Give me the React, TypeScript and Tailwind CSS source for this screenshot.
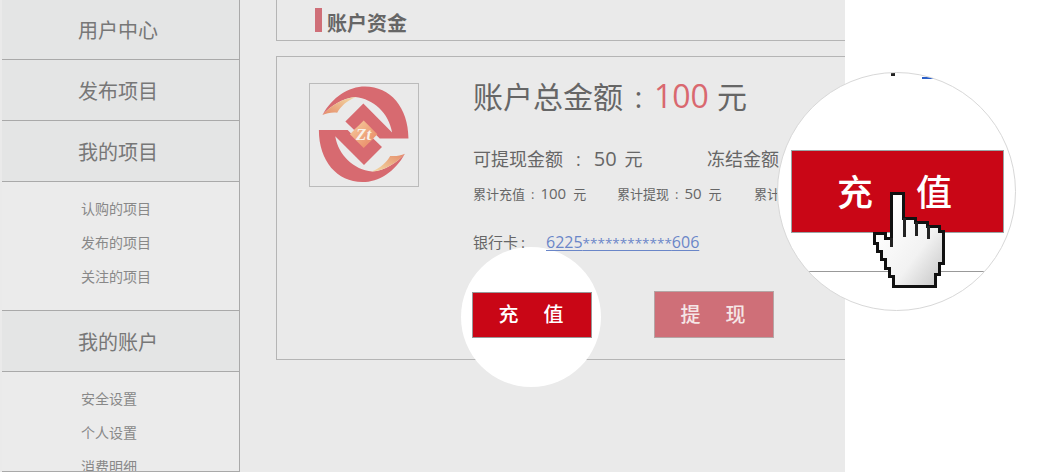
import React from 'react';

const menu = [
  { title: '用户中心', items: [] as string[] },
  { title: '发布项目', items: [] as string[] },
  { title: '我的项目', items: ['认购的项目', '发布的项目', '关注的项目'] },
  { title: '我的账户', items: ['安全设置', '个人设置', '消费明细'] },
];

function Logo() {
  const red = '#d76a70';
  const upper = 'M328 207 L240 207 L190 156 L162 181 L135 155 L190 100 L278 188 C268 130 222 86 165 80 C125 84 92 106 65 135 C95 80 145 48 195 48 C272 48 328 112 328 207 Z';
  const swoosh = 'M65 135 C92 106 125 84 168 80 C138 92 122 108 110 128 C92 126 78 130 65 135 Z';
  return (
    <svg viewBox="28 40 328 312" className="h-full w-full">
      <defs>
        <linearGradient id="swoosh" x1="0" y1="1" x2="1" y2="0">
          <stop offset="0" stopColor="#e58a68" />
          <stop offset="1" stopColor="#f3dca6" />
        </linearGradient>
        <linearGradient id="gem" x1="0" y1="0" x2="1" y2="1">
          <stop offset="0" stopColor="#f6cfa0" />
          <stop offset="1" stopColor="#e8815f" />
        </linearGradient>
      </defs>
      <path d={upper} fill={red} />
      <path d={upper} fill={red} transform="rotate(180 191 194)" />
      <path d={swoosh} fill="url(#swoosh)" />
      <path d={swoosh} fill="url(#swoosh)" transform="rotate(180 191 194)" />
      <path d="M191 152 L233 194 L191 236 L149 194 Z" fill="url(#gem)" />
      <text x="191" y="212" textAnchor="middle" fontSize="52" fontStyle="italic" fontWeight="700" fill="#f8f1ea" fontFamily="'Liberation Serif', serif">Zt</text>
    </svg>
  );
}

function HandCursor() {
  const outline =
    'M19 4 L31 4 L31 29 L43 29 L43 33 L55 33 L55 37 L67 37 L67 42 L71 42 L71 74 L67 74 L67 85 L63 85 L63 97 L21 97 L21 87 L17 87 L17 79 L13 79 L13 70 L9 70 L9 62 L5 62 L5 54 L2 54 L2 44 L13 44 L13 49 L19 49 Z';
  return (
    <svg viewBox="0 0 76 102" className="absolute left-[94px] top-[116px] h-[102px] w-[76px]" shapeRendering="crispEdges">
      <defs>
        <linearGradient id="handFill" x1="0.2" y1="0.2" x2="1" y2="1">
          <stop offset="0" stopColor="#ffffff" />
          <stop offset="0.55" stopColor="#f2f2f2" />
          <stop offset="1" stopColor="#c4c4c4" />
        </linearGradient>
      </defs>
      <path d={outline} fill="url(#handFill)" stroke="#111" strokeWidth="3" />
      <path d="M32 29 L32 48 M44 33 L44 47 M56 37 L56 50" stroke="#222" strokeWidth="3" fill="none" />
      <path d="M19 49 L19 58" stroke="#222" strokeWidth="3" fill="none" />
    </svg>
  );
}

export default function App() {
  return (
    <div className="flex h-[472px] w-[1062px] overflow-hidden bg-white font-['Open_Sans','Noto_Sans_CJK_SC',sans-serif] relative">
      <div className="flex w-[845px] shrink-0 bg-[#eaeaea] pl-[2px]">
        {/* sidebar */}
        <div className="-mt-px h-[473px] w-[238px] shrink-0 overflow-hidden border-r border-b border-[#a9a9a9] bg-[#ebebeb]">
          {menu.map((group) => (
            <div key={group.title}>
              <div className="flex h-[61px] items-center justify-center border-b border-[#a9a9a9] bg-[#e4e5e5] pt-[3px] pr-[5px] text-[20px] text-[#777]">
                {group.title}
              </div>
              {group.items.length > 0 && (
                <div className="h-[129px] border-b border-[#a9a9a9] pt-[10px] pl-[79px] text-[14px] leading-[34px] text-[#888]">
                  {group.items.map((item) => (
                    <div key={item}>{item}</div>
                  ))}
                </div>
              )}
            </div>
          ))}
        </div>

        {/* main */}
        <div className="relative flex-1 overflow-hidden pl-[36px]">
          <div className="flex h-[41px] items-start border-b border-l border-[#b5b5b5] pl-[38px] pt-[8px]">
            <div className="h-[24px] w-[7px] bg-[#cf6f78]" />
            <div className="ml-[5px] text-[20px] leading-[32px] font-bold text-[#666]">账户资金</div>
          </div>

          <div className="-mr-px mt-[15px] flex h-[304px] border border-[#b5b5b5] pl-[32px] pt-[26px]">
            <div className="h-[104px] w-[110px] shrink-0 border border-[#bbb] p-0">
              <Logo />
            </div>
            <div className="relative z-10 ml-[54px] whitespace-nowrap text-[#666]">
              <div className="-mt-[12px] flex items-baseline text-[30px] leading-[50px]">
                <span>账户总金额</span>
                <span className="w-[31px] text-center">:</span>
                <span className="text-[32px] text-[#d9686f]">100</span>
                <span className="ml-[8px]">元</span>
              </div>
              <div className="mt-[24px] flex items-baseline text-[18px] leading-[26px]">
                <span className="w-[234px]">
                  可提现金额<span className="mx-[13px]">:</span><span className="text-[20px]">50</span><span className="ml-[8px]">元</span>
                </span>
                <span>
                  冻结金额<span className="mx-[13px]">:</span><span className="text-[20px]">0</span><span className="ml-[8px]">元</span>
                </span>
              </div>
              <div className="mt-[11px] flex items-baseline text-[13px] leading-[20px]">
                <span className="w-[144px]">累计充值<span className="mx-[6px]">:</span><span className="text-[15px]">100</span><span className="ml-[7px]">元</span></span>
                <span className="w-[137px]">累计提现<span className="mx-[6px]">:</span><span className="text-[15px]">50</span><span className="ml-[7px]">元</span></span>
                <span>累计</span>
              </div>
              <div className="mt-[27px] flex text-[15px] leading-[22px]">
                <span className="w-[73px]">银行卡<span className="ml-[3px]">:</span></span>
                <span className="text-[16px] text-[#6a86c8] underline underline-offset-2">
                  6225<span className="text-[13.5px]">************</span>606
                </span>
              </div>
              <div className="mt-[37px] -ml-[1px] flex items-end gap-[62px]">
                <button className="flex h-[46px] w-[120px] items-center justify-center gap-[25px] border border-[#999] bg-[#c90616] pr-[2px] text-[20px] font-medium text-white">
                  <span>充</span>
                  <span>值</span>
                </button>
                <button className="flex h-[47px] w-[120px] items-center justify-center gap-[25px] border border-[#b5a5a5] bg-[#cf6f78] pr-[2px] text-[20px] font-medium text-[#f5e6e6]">
                  <span>提</span>
                  <span>现</span>
                </button>
              </div>
            </div>
          </div>

          {/* white spot behind the button */}
          <div className="absolute left-[221px] top-[247px] h-[140px] w-[140px] rounded-full bg-white" />
        </div>
      </div>

      {/* magnifier */}
      <div className="absolute left-[777px] top-[72px] z-20 h-[239px] w-[239px] overflow-hidden rounded-full border border-[#d8d8d8] bg-white">
        <div className="absolute left-[113px] top-0 h-[3px] w-[4px] bg-[#222]" />
        <div className="absolute left-[144px] top-[4px] h-[2px] w-[14px] bg-[#2a5fc8]" />
        <div className="ml-[13px] mt-[77px] flex h-[83px] w-[213px] items-center justify-center gap-[43px] border border-[#9aa5a5] bg-[#c90616] pt-[3px] pr-[6px] text-[36px] font-medium text-white">
          <span>充</span>
          <span>值</span>
        </div>
        <div className="ml-[29px] mt-[38px] h-px w-[178px] bg-[#999]" />
        <HandCursor />
      </div>
    </div>
  );
}
